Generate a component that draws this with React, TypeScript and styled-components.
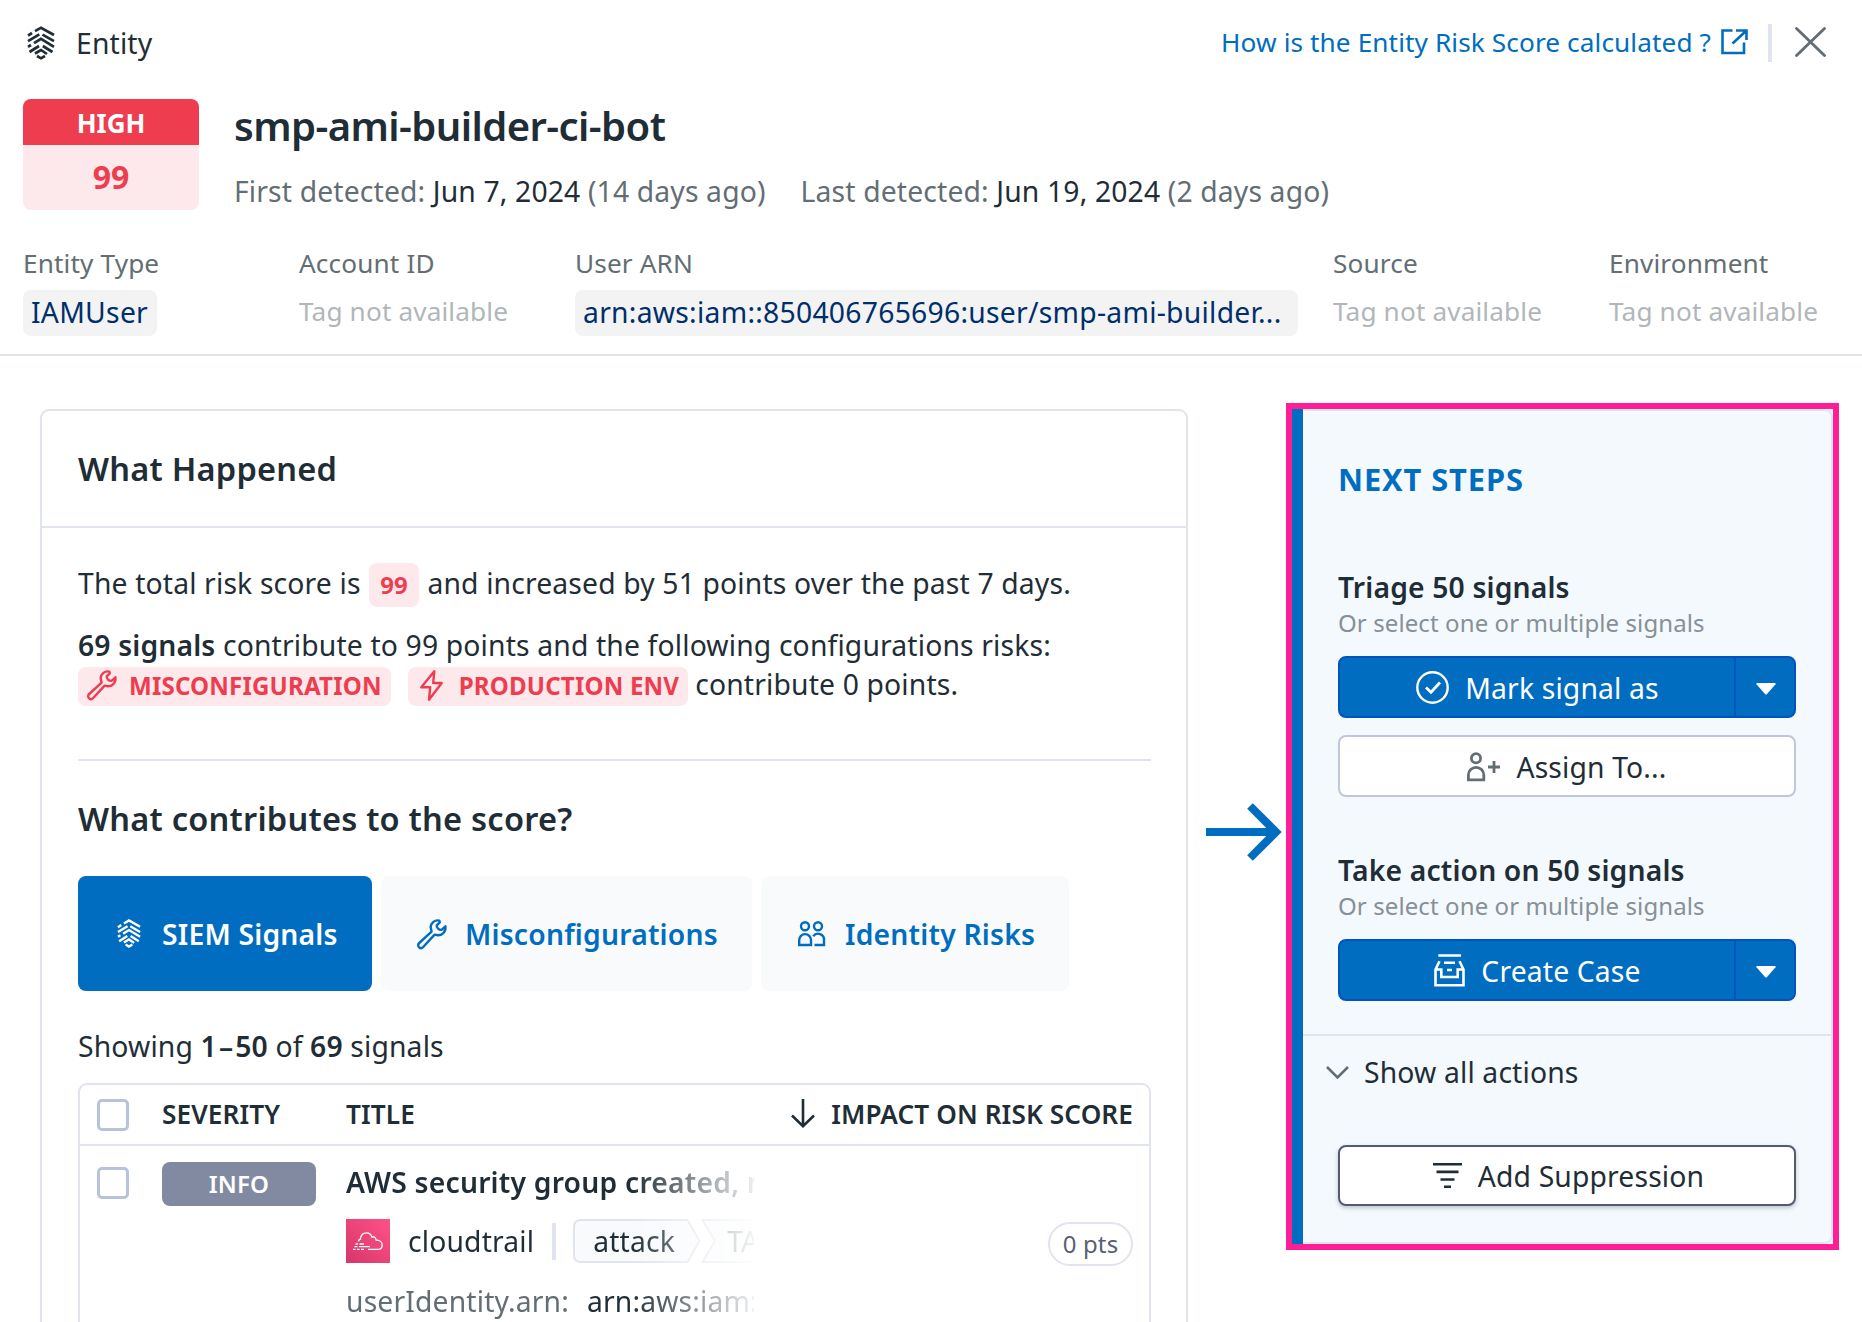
import React from "react";
import styled, { createGlobalStyle } from "styled-components";

const color = {
  text: "#1f2d36",
  muted: "#636e74",
  faint: "#b1b6ba",
  hint: "#879096",
  line: "#e0e4ee",
  blue: "#006dc0",
  blueBorder: "#0054bf",
  red: "#ed3d4f",
  pink: "#fde9eb",
};

const GlobalStyle = createGlobalStyle`
  * { box-sizing: border-box; }
  body {
    margin: 0;
    background: #fff;
    color: ${color.text};
    font-family: "Noto Sans", sans-serif;
    font-size: 28.3px;
    line-height: 38px;
    letter-spacing: 0.15px;
  }
  svg { display: block; flex: none; overflow: visible; }
  button { font: inherit; color: inherit; letter-spacing: inherit; margin: 0; padding: 0; cursor: pointer; }
  p, h1, h2, h3 { margin: 0; }
`;

const Page = styled.div`
  width: 1862px;
  height: 1322px;
  overflow: hidden;
`;

/* ---------- header ---------- */

const Header = styled.header`
  height: 356px;
  border-bottom: 2px solid ${color.line};
`;

const TopBar = styled.div`
  display: flex;
  align-items: center;
  height: 85px;
  padding: 0 36px 0 27px;
`;

const Crumb = styled.span`
  margin-left: 21px;
  letter-spacing: 0.15px;
`;

const HelpLink = styled.a`
  display: flex;
  align-items: center;
  gap: 10px;
  margin-left: auto;
  color: ${color.blue};
  font-size: 26.2px;
  line-height: 34px;
  letter-spacing: 0.1px;
  padding-bottom: 1px;
`;

const TopDivider = styled.span`
  width: 4px;
  height: 38px;
  margin: 0 23px 0 20px;
  background: ${color.line};
`;

const IconButton = styled.button`
  border: 0;
  padding-bottom: 1px;
  background: none;
`;

const Summary = styled.div`
  display: flex;
  gap: 35px;
  padding: 14px 23px 0;
`;

const RiskBadge = styled.div`
  width: 176px;
  height: 111px;
  border-radius: 8px;
  overflow: hidden;
  text-align: center;
  font-weight: 700;
  letter-spacing: 0;
  background: ${color.pink};
  color: ${color.red};
`;

const RiskLevel = styled.div`
  height: 46px;
  line-height: 49px;
  font-size: 26px;
  background: ${color.red};
  color: #fff;
`;

const RiskScore = styled.div`
  font-size: 32px;
  line-height: 64px;
`;

const EntityName = styled.h1`
  font-size: 40px;
  line-height: 54px;
  font-weight: 600;
  letter-spacing: -0.57px;
`;

const Dates = styled.div`
  display: flex;
  gap: 35px;
  margin-top: 19px;
  color: ${color.muted};
  b { font-weight: 400; color: ${color.text}; }
`;

const Tags = styled.div`
  display: grid;
  grid-template-columns: 241px 241px 723px 241px 241px;
  column-gap: 35px;
  padding: 36px 0 0 23px;
`;

const TagLabel = styled.div`
  font-size: 26.2px;
  line-height: 34px;
  margin-bottom: 10px;
  letter-spacing: 0.13px;
  color: ${color.muted};
`;

const TagEmpty = styled.div`
  font-size: 26.2px;
  line-height: 42px;
  letter-spacing: 0.13px;
  color: ${color.faint};
`;

const TagChip = styled.div<{ $fill?: boolean }>`
  width: ${(p) => (p.$fill ? "100%" : "fit-content")};
  height: 46px;
  padding: 0 9px 0 8px;
  border-radius: 8px;
  line-height: 45px;
  letter-spacing: 0.26px;
  color: #002f6c;
  background: #f3f3f4;
`;

/* ---------- body ---------- */

const Main = styled.main`
  display: flex;
  align-items: flex-start;
  padding: 47px 0 0 40px;
`;

const Card = styled.section`
  width: 1148px;
  height: 960px;
  margin-top: 6px;
  border: 2px solid ${color.line};
  border-radius: 9px;
`;

const CardHeader = styled.div`
  height: 117px;
  padding-left: 36px;
  border-bottom: 2px solid ${color.line};
`;

const Heading = styled.h2<{ $line: number }>`
  font-size: 32.6px;
  line-height: ${(p) => p.$line}px;
  font-weight: 600;
  letter-spacing: 0.22px;
`;

const CardBody = styled.div`
  padding: 36px 35px 0 36px;
`;

const ScoreLine = styled.div`
  display: flex;
  align-items: flex-start;
  gap: 8px;
  height: 43px;
  line-height: 39px;
`;

const ChipLine = styled.div`
  display: flex;
  align-items: flex-start;
  height: 42px;
  line-height: 39px;
`;

const Paragraph = styled.p`
  margin-top: 19px;
  line-height: 39px;
  b { font-weight: 600; }
`;

const ScorePill = styled.span`
  height: 44px;
  margin-top: -1px;
  padding: 0 11.5px;
  border-radius: 8px;
  font-size: 24px;
  line-height: 44px;
  font-weight: 700;
  color: ${color.red};
  background: ${color.pink};
`;

const RiskChip = styled.span`
  display: flex;
  gap: 12px;
  height: 39px;
  margin: 2px 17px 0 0;
  padding: 0 9px;
  border-radius: 8px;
  font-size: 24.1px;
  line-height: 38px;
  font-weight: 700;
  letter-spacing: 0.17px;
  color: ${color.red};
  background: ${color.pink};
  svg { margin-top: 3px; }
`;

const ChipIcon = styled.span`
  display: flex;
  justify-content: center;
  width: 30px;
`;

const ChipTail = styled.span`
  margin-left: -10px;
`;

const Rule = styled.hr`
  height: 2px;
  margin: 52px 0 36px;
  border: 0;
  background: ${color.line};
`;

const Tabs = styled.div`
  display: flex;
  gap: 9px;
  margin-top: 35px;
`;

const Tab = styled.button<{ $active?: boolean; $w: number }>`
  display: flex;
  align-items: center;
  width: ${(p) => p.$w}px;
  height: 115px;
  padding-left: 35px;
  border: 0;
  border-radius: 8px;
  font-weight: 600;
  letter-spacing: 0.2px;
  background: ${(p) => (p.$active ? color.blue : "#f9fafc")};
  color: ${(p) => (p.$active ? "#fff" : color.blue)};
`;

const TabIcon = styled.span`
  display: flex;
  justify-content: center;
  width: 32px;
  margin-right: 17px;
`;

const Showing = styled.p`
  margin: 36px 0 18px;
  b { font-weight: 600; }
`;

const Dash = styled.span`
  margin: 0 2px;
`;

const Table = styled.div`
  height: 300px;
  border: 2px solid ${color.line};
  border-radius: 9px;
`;

const columns = "65px 184px 1fr auto";

const TableHead = styled.div`
  display: grid;
  grid-template-columns: ${columns};
  align-items: center;
  height: 61px;
  padding: 0 16px 0 17px;
  border-bottom: 2px solid ${color.line};
  font-size: 26.2px;
  font-weight: 600;
  letter-spacing: 0.1px;
`;

const HeadLabel = styled.span`
  padding-bottom: 2px;
`;

const SortLabel = styled.span`
  display: flex;
  align-items: center;
  gap: 16px;
  padding-bottom: 2px;
`;

const TableRow = styled.div`
  display: grid;
  grid-template-columns: ${columns};
  height: 196px;
  padding: 0 16px 0 17px;
`;

const Checkbox = styled.span<{ $top?: number }>`
  width: 32px;
  height: 32px;
  margin: ${(p) => p.$top ?? 0}px 0 0 -0.5px;
  border: 3px solid #b9c2db;
  border-radius: 5px;
  background: #fff;
`;

const Severity = styled.span`
  width: 154px;
  height: 44px;
  margin-top: 16px;
  border-radius: 8px;
  text-align: center;
  font-size: 24px;
  line-height: 43px;
  font-weight: 600;
  color: #fff;
  background: #828aa2;
`;

const TitleCell = styled.div`
  width: 408px;
  padding-top: 17px;
  overflow: hidden;
  white-space: nowrap;
  mask-image: linear-gradient(to right, #000 285px, rgba(0, 0, 0, 0.08) 408px);
`;

const SignalTitle = styled.h3`
  font-size: 28.3px;
  line-height: 38px;
  font-weight: 600;
  letter-spacing: 0.2px;
`;

const SourceRow = styled.div`
  display: flex;
  align-items: center;
  height: 44px;
  margin: 18px 0 19px;
`;

const SourceName = styled.span`
  margin-left: 18px;
`;

const SourceDivider = styled.span`
  flex: none;
  width: 4px;
  height: 37px;
  margin: 0 17px 0 18px;
  background: ${color.line};
`;

const Step = styled.span<{ $w: number; $pad: number; $dim?: boolean }>`
  position: relative;
  z-index: 0;
  flex: none;
  width: ${(p) => p.$w}px;
  height: 44px;
  padding-left: ${(p) => p.$pad}px;
  line-height: 44px;
  color: ${(p) => (p.$dim ? color.muted : color.text)};
  svg { position: absolute; inset: 0; z-index: -1; }
`;

const Attribute = styled.div`
  display: flex;
  gap: 18px;
  color: ${color.muted};
  b { font-weight: 400; color: ${color.text}; }
`;

const Points = styled.span`
  align-self: center;
  width: 85px;
  height: 44px;
  border: 2px solid ${color.line};
  border-radius: 22px;
  text-align: center;
  font-size: 24px;
  line-height: 39px;
  color: #585f75;
`;

/* ---------- side panel ---------- */

const Pointer = styled.div`
  padding: 400px 5px 0 18px;
`;

const Highlight = styled.div`
  width: 553px;
  height: 847px;
  border: 6px solid #ff1e96;
`;

const Panel = styled.aside`
  height: 100%;
  border: 2px solid ${color.line};
  border-left: 0;
  border-radius: 0 8px 8px 0;
  background: #f4f9fe;
  display: flex;
`;

const PanelBar = styled.span`
  flex: none;
  width: 11px;
  margin: -2px 0;
  background: ${color.blue};
`;

const PanelContent = styled.div`
  flex: 1;
`;

const Group = styled.div<{ $top: number }>`
  padding: 0 35px;
  margin-top: ${(p) => p.$top}px;
`;

const PanelTitle = styled.h2`
  padding: 46px 35px 0;
  font-size: 30.8px;
  line-height: 44px;
  font-weight: 700;
  letter-spacing: 0.9px;
  color: ${color.blue};
`;

const GroupTitle = styled.h3`
  font-size: 28.3px;
  line-height: 38px;
  font-weight: 600;
`;

const GroupHint = styled.p`
  margin-bottom: 17px;
  font-size: 24px;
  line-height: 33px;
  letter-spacing: 0.1px;
  color: ${color.hint};
`;

const SplitButton = styled.div`
  display: flex;
  height: 62px;
  border: 2px solid ${color.blueBorder};
  border-radius: 8px;
  color: #fff;
  background: ${color.blue};
`;

const SplitMain = styled.button`
  flex: 1;
  display: flex;
  align-items: center;
  justify-content: center;
  gap: 16px;
  border: 0;
  background: none;
  padding: 1px 0 0 1px;
`;

const SplitCaret = styled.button`
  display: flex;
  align-items: center;
  justify-content: center;
  width: 60px;
  padding: 3px 0 0 1px;
  border: 0;
  border-left: 2px solid ${color.blueBorder};
  background: none;
`;

const OutlineButton = styled.button<{ $strong?: boolean }>`
  display: flex;
  align-items: center;
  justify-content: center;
  gap: 16px;
  width: 100%;
  height: ${(p) => (p.$strong ? 61 : 62)}px;
  margin-top: ${(p) => (p.$strong ? 0 : 17)}px;
  padding: ${(p) => (p.$strong ? "0 0 0 3px" : "2px 0 0")};
  border: 2px solid ${(p) => (p.$strong ? "#545b70" : "#c0c6de")};
  border-radius: 8px;
  background: #fff;
  box-shadow: ${(p) => (p.$strong ? "0 2px 4px rgba(30, 40, 60, 0.25)" : "none")};
`;

const PanelRule = styled.div`
  height: 2px;
  margin-top: 33px;
  background: ${color.line};
`;

const ShowAll = styled.button`
  display: flex;
  align-items: center;
  gap: 15px;
  margin: 17px 0 0 23px;
  border: 0;
  background: none;
`;

/* ---------- icons ---------- */

const SiemIcon = ({ w, h }: { w: number; h: number }) => (
  <svg width={w} height={h} viewBox="0 0 28 34" fill="none" stroke="currentColor" strokeWidth="2.7">
    <path d="M8 5.2 14 1.7 27 9M1 9.6 5 7M1 15.2 12.3 8.4M15.5 8.6 27 15.2M1 20.8 4 19M7 17.2 14 12.9 27 20.8M2.5 26 12 20M15.8 20 25.5 26M8 27.5 14 24 20 28M10 30 14 32.3 18 30" />
  </svg>
);

const WrenchIcon = () => (
  <svg width="30" height="30" viewBox="0 0 30 30" fill="none" stroke="currentColor" strokeWidth="2.4" strokeLinejoin="round">
    <path d="M22.3 1.6C17.6.6 13.4 4.2 13.7 8.6L14.6 12.6 2.2 24C.7 25.4.9 27.3 2.1 28.3 3.3 29.4 5 29.3 6.2 28L17.6 15.6 21 16.2C25.6 16.4 29.2 12.3 28.4 7.3L24.5 10.8C22.2 11.3 19.3 8.8 19.7 6.3L22.8 3.3Z" />
  </svg>
);

const BoltIcon = () => (
  <svg width="23" height="31" viewBox="0 0 23 31" fill="none" stroke="currentColor" strokeWidth="2.4" strokeLinejoin="round">
    <path d="M14.3 1.3 1.3 17.3H10.2L9 29.7 21.7 13H13.2Z" />
  </svg>
);

const PeopleIcon = () => (
  <svg width="28" height="26" viewBox="0 0 28 26" fill="none" stroke="currentColor" strokeWidth="2.4">
    <circle cx="7" cy="5.2" r="4" />
    <circle cx="20" cy="5.2" r="4" />
    <path d="M1.2 24V19a5.9 5.9 0 0 1 11.8 0V24ZM15.3 15.2A5.9 5.9 0 0 1 26 19V24H16.5" />
  </svg>
);

const ExternalIcon = () => (
  <svg width="27" height="26" viewBox="0 0 27 26" fill="none" stroke="currentColor" strokeWidth="2.6">
    <path d="M11.5 1.5H1.5V24H23V13.5M15 1.5H25.5V11M25 2 11.5 14.5" />
  </svg>
);

const CloseIcon = () => (
  <svg width="31" height="30" viewBox="0 0 31 30" stroke={color.muted} strokeWidth="2.9" strokeLinecap="round">
    <path d="M1.5 1.5 29.5 28.5M29.5 1.5 1.5 28.5" />
  </svg>
);

const SortIcon = () => (
  <svg width="24" height="29" viewBox="0 0 24 29" fill="none" stroke="currentColor" strokeWidth="2.6">
    <path d="M12 0V27M1 16.5 12 27.2 23 16.5" />
  </svg>
);

const CheckCircleIcon = () => (
  <svg width="33" height="33" viewBox="0 0 33 33" fill="none" stroke="currentColor" strokeWidth="2.4">
    <circle cx="16.5" cy="16.5" r="15.2" />
    <path d="M10 16.5 15 21.2 24 11.5" strokeWidth="2.8" />
  </svg>
);

const UserPlusIcon = () => (
  <svg width="33" height="30" viewBox="0 0 33 30" fill="none" stroke={color.muted} strokeWidth="2.8">
    <circle cx="9" cy="6.2" r="4.6" />
    <path d="M1.4 27.8V23a7.7 7.7 0 0 1 15.4 0V27.8ZM21 15H33M27 9V21" />
  </svg>
);

const CaseIcon = () => (
  <svg width="31" height="33" viewBox="0 0 31 33" fill="none" stroke="currentColor" strokeWidth="2.6">
    <path d="M4.3 1.5H27M10 8.8H21M5.5 7.3 1.5 15.5V31.3H29.5V15.5L25.5 7.3M1.5 15.5H7.3V23H23.7V15.5H29.5M13 16H18" />
  </svg>
);

const FilterIcon = () => (
  <svg width="29" height="27" viewBox="0 0 29 27" stroke="currentColor" strokeWidth="2.6">
    <path d="M0 2.3H29M3.5 9.9H25.5M7.5 17.5H21.5M11 24.8H18" />
  </svg>
);

const CaretIcon = () => (
  <svg width="20" height="12" viewBox="0 0 20 12" fill="currentColor">
    <path d="M1 0H19Q20 .3 19.5 1.2L11 11Q10 12 9 11L.5 1.2Q0 .3 1 0Z" />
  </svg>
);

const ChevronIcon = () => (
  <svg width="23" height="13" viewBox="0 0 23 13" fill="none" stroke={color.muted} strokeWidth="2.6">
    <path d="M1 1 11.5 11.5 22 1" />
  </svg>
);

const ArrowIcon = () => (
  <svg width="75" height="58" viewBox="0 0 75 58" fill="none" stroke={color.blue} strokeWidth="8">
    <path d="M0 29H70M44 3 70 29 44 55" />
  </svg>
);

const CloudTrailIcon = () => (
  <svg width="44" height="44" viewBox="0 0 44 44" fill="none" stroke="#fff" strokeWidth="1.3">
    <defs>
      <linearGradient id="trail" x1="0" y1="1" x2="1" y2="0">
        <stop offset="0" stopColor="#d6366b" />
        <stop offset="1" stopColor="#ff5286" />
      </linearGradient>
    </defs>
    <rect width="44" height="44" fill="url(#trail)" stroke="none" />
    <path d="M12.3 22.5C12.5 20.8 13.5 20.2 14.5 20 14.8 15.5 17.5 13.8 20.5 13.8 23.5 13.8 25.2 15.5 26 18.2 27.5 17.2 29.8 18 30.2 21.2 33.5 21.2 36.2 23 36.2 26 36.2 28.5 34.5 30.3 32 30.3H22M9.5 25H12M13.5 25H18M8.5 27.7H11.5M13 27.7H24M7 30.3H9.5M11 30.3H13.5M15 30.3H18" />
  </svg>
);

const AttackShape = () => (
  <svg width="128" height="44" viewBox="0 0 128 44" fill="#f9fafc" stroke={color.line} strokeWidth="2">
    <path d="M8 1H114.5L126.5 22 114.5 43H8Q1 43 1 36V8Q1 1 8 1Z" />
  </svg>
);

const NextShape = () => (
  <svg width="140" height="44" viewBox="0 0 140 44" fill="#f9fafc" stroke={color.line} strokeWidth="2">
    <path d="M1.5 1H126L139 22 126 43H1.5L14 22Z" />
  </svg>
);

/* ---------- page ---------- */

const tabs = [
  { label: "SIEM Signals", width: 294, icon: <SiemIcon w={24} h={29} />, active: true },
  { label: "Misconfigurations", width: 371, icon: <WrenchIcon /> },
  { label: "Identity Risks", width: 308, icon: <PeopleIcon /> },
];

export default function App() {
  return (
    <Page>
      <GlobalStyle />
      <Header>
        <TopBar>
          <SiemIcon w={28} h={34} />
          <Crumb>Entity</Crumb>
          <HelpLink>
            How is the Entity Risk Score calculated ?
            <ExternalIcon />
          </HelpLink>
          <TopDivider />
          <IconButton aria-label="Close">
            <CloseIcon />
          </IconButton>
        </TopBar>
        <Summary>
          <RiskBadge>
            <RiskLevel>HIGH</RiskLevel>
            <RiskScore>99</RiskScore>
          </RiskBadge>
          <div>
            <EntityName>smp-ami-builder-ci-bot</EntityName>
            <Dates>
              <span>
                First detected: <b>Jun 7, 2024</b> (14 days ago)
              </span>
              <span>
                Last detected: <b>Jun 19, 2024</b> (2 days ago)
              </span>
            </Dates>
          </div>
        </Summary>
        <Tags>
          <div>
            <TagLabel>Entity Type</TagLabel>
            <TagChip>IAMUser</TagChip>
          </div>
          <div>
            <TagLabel>Account ID</TagLabel>
            <TagEmpty>Tag not available</TagEmpty>
          </div>
          <div>
            <TagLabel>User ARN</TagLabel>
            <TagChip $fill>arn:aws:iam::850406765696:user/smp-ami-builder...</TagChip>
          </div>
          <div>
            <TagLabel>Source</TagLabel>
            <TagEmpty>Tag not available</TagEmpty>
          </div>
          <div>
            <TagLabel>Environment</TagLabel>
            <TagEmpty>Tag not available</TagEmpty>
          </div>
        </Tags>
      </Header>

      <Main>
        <Card>
          <CardHeader>
            <Heading $line={115}>What Happened</Heading>
          </CardHeader>
          <CardBody>
            <ScoreLine>
              <span>The total risk score is</span>
              <ScorePill>99</ScorePill>
              <span>and increased by 51 points over the past 7 days.</span>
            </ScoreLine>
            <Paragraph>
              <b>69 signals</b> contribute to 99 points and the following configurations risks:
            </Paragraph>
            <ChipLine>
              <RiskChip>
                <ChipIcon>
                  <WrenchIcon />
                </ChipIcon>
                MISCONFIGURATION
              </RiskChip>
              <RiskChip>
                <ChipIcon>
                  <BoltIcon />
                </ChipIcon>
                PRODUCTION ENV
              </RiskChip>
              <ChipTail>contribute 0 points.</ChipTail>
            </ChipLine>
            <Rule />
            <Heading $line={44}>What contributes to the score?</Heading>
            <Tabs>
              {tabs.map((t) => (
                <Tab key={t.label} $w={t.width} $active={t.active}>
                  <TabIcon>{t.icon}</TabIcon>
                  {t.label}
                </Tab>
              ))}
            </Tabs>
            <Showing>
              Showing{" "}
              <b>
                1<Dash>–</Dash>50
              </b>{" "}
              of <b>69</b> signals
            </Showing>
            <Table>
              <TableHead>
                <Checkbox />
                <HeadLabel>SEVERITY</HeadLabel>
                <HeadLabel>TITLE</HeadLabel>
                <SortLabel>
                  <SortIcon />
                  IMPACT ON RISK SCORE
                </SortLabel>
              </TableHead>
              <TableRow>
                <Checkbox $top={21} />
                <Severity>INFO</Severity>
                <TitleCell>
                  <SignalTitle>AWS security group created, modified or deleted</SignalTitle>
                  <SourceRow>
                    <CloudTrailIcon />
                    <SourceName>cloudtrail</SourceName>
                    <SourceDivider />
                    <Step $w={128} $pad={20}>
                      <AttackShape />
                      attack
                    </Step>
                    <Step $w={140} $pad={26} $dim>
                      <NextShape />
                      TA0005
                    </Step>
                  </SourceRow>
                  <Attribute>
                    userIdentity.arn:
                    <b>arn:aws:iam::850406765696</b>
                  </Attribute>
                </TitleCell>
                <Points>0 pts</Points>
              </TableRow>
            </Table>
          </CardBody>
        </Card>

        <Pointer>
          <ArrowIcon />
        </Pointer>

        <Highlight>
          <Panel>
            <PanelBar />
            <PanelContent>
              <PanelTitle>NEXT STEPS</PanelTitle>
              <Group $top={67}>
                <GroupTitle>Triage 50 signals</GroupTitle>
                <GroupHint>Or select one or multiple signals</GroupHint>
                <SplitButton>
                  <SplitMain>
                    <CheckCircleIcon />
                    Mark signal as
                  </SplitMain>
                  <SplitCaret aria-label="More statuses">
                    <CaretIcon />
                  </SplitCaret>
                </SplitButton>
                <OutlineButton>
                  <UserPlusIcon />
                  Assign To...
                </OutlineButton>
              </Group>
              <Group $top={54}>
                <GroupTitle>Take action on 50 signals</GroupTitle>
                <GroupHint>Or select one or multiple signals</GroupHint>
                <SplitButton>
                  <SplitMain>
                    <CaseIcon />
                    Create Case
                  </SplitMain>
                  <SplitCaret aria-label="More case options">
                    <CaretIcon />
                  </SplitCaret>
                </SplitButton>
              </Group>
              <PanelRule />
              <ShowAll>
                <ChevronIcon />
                Show all actions
              </ShowAll>
              <Group $top={54}>
                <OutlineButton $strong>
                  <FilterIcon />
                  Add Suppression
                </OutlineButton>
              </Group>
            </PanelContent>
          </Panel>
        </Highlight>
      </Main>
    </Page>
  );
}
